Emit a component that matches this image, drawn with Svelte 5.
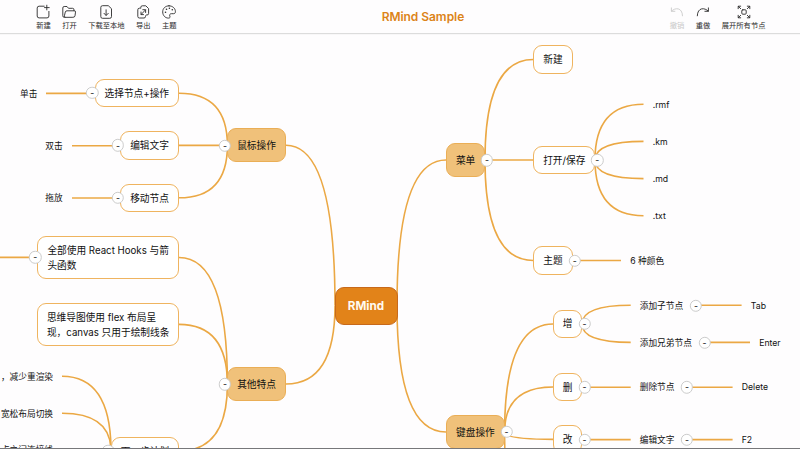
<script>
  const left = [
    { label: '新建', icon: 'new' },
    { label: '打开', icon: 'open' },
    { label: '下载至本地', icon: 'download' },
    { label: '导出', icon: 'export' },
    { label: '主题', icon: 'theme' }
  ];
  const right = [
    { label: '撤销', icon: 'undo', disabled: true },
    { label: '重做', icon: 'redo' },
    { label: '展开所有节点', icon: 'expand' }
  ];

  // x, y: top-left corner of the node on the canvas
  const nodes = [
    { kind: 'root', text: 'RMind', x: 334.5, y: 286.5, w: 63, h: 38 },
    { kind: 'main', text: '鼠标操作', x: 227, y: 128.3, w: 59, h: 34.2 },
    { kind: 'main', text: '其他特点', x: 227, y: 367, w: 59, h: 34.2 },
    { kind: 'main', text: '菜单', x: 446, y: 143, w: 39.2, h: 34.2 },
    { kind: 'main', text: '键盘操作', x: 446, y: 415, w: 58.8, h: 34.2 },
    { kind: 'sub', text: '选择节点+操作', x: 94.6, y: 79, w: 84.4, h: 28.3 },
    { kind: 'sub', text: '编辑文字', x: 120, y: 131.3, w: 59, h: 28.3 },
    { kind: 'sub', text: '移动节点', x: 120, y: 183.7, w: 59, h: 28.3 },
    { kind: 'sub', text: '全部使用 React Hooks 与箭\n头函数', x: 37.3, y: 236, w: 141.7, h: 43 },
    { kind: 'sub', text: '思维导图使用 flex 布局呈\n现，canvas 只用于绘制线条', x: 37.3, y: 303, w: 141.7, h: 43 },
    { kind: 'sub', text: '下一步计划', x: 111, y: 437, w: 68, h: 28.3 },
    { kind: 'sub', text: '新建', x: 533.3, y: 45.3, w: 39.4, h: 28.3 },
    { kind: 'sub', text: '打开/保存', x: 533.3, y: 146, w: 62, h: 28.3 },
    { kind: 'sub', text: '主题', x: 533.3, y: 246.3, w: 39.4, h: 28.3 },
    { kind: 'sub', text: '增', x: 553, y: 309.5, w: 29.3, h: 28.3 },
    { kind: 'sub', text: '删', x: 553, y: 373, w: 29.3, h: 28.3 },
    { kind: 'sub', text: '改', x: 553, y: 425.3, w: 29.3, h: 28.3 }
  ];

  // x: left edge of the text (right edge when end is set), y: its middle
  const leaves = [
    { text: '单击', x: 20, y: 93.5 },
    { text: '双击', x: 45.3, y: 146 },
    { text: '拖放', x: 45.3, y: 198 },
    { text: '，减少重渲染', x: 53, y: 376.5, end: true },
    { text: '宽松布局切换', x: 53, y: 413.5, end: true },
    { text: '点之间连接线', x: 53, y: 450, end: true },
    { text: '.rmf', x: 652.7, y: 104.5 },
    { text: '.km', x: 652.7, y: 141.8 },
    { text: '.md', x: 652.7, y: 178.8 },
    { text: '.txt', x: 652.7, y: 216 },
    { text: '6 种颜色', x: 630.2, y: 261 },
    { text: '添加子节点', x: 639.7, y: 305.5 },
    { text: 'Tab', x: 750.8, y: 305.5 },
    { text: '添加兄弟节点', x: 639.7, y: 342.5 },
    { text: 'Enter', x: 759.2, y: 342.5 },
    { text: '删除节点', x: 639.7, y: 387.3 },
    { text: 'Delete', x: 741.7, y: 387.3 },
    { text: '编辑文字', x: 639.7, y: 439.7 },
    { text: 'F2', x: 741.7, y: 439.7 }
  ];

  const toggles = [
    [92.3, 93], [118, 145.4], [118, 198], [35.3, 257.3], [225, 145.5], [225, 384.2], [108.3, 451],
    [487, 160.2], [597.2, 160.2], [574.7, 260.5], [584.6, 324], [584.6, 387.2], [584.6, 439.6],
    [506.6, 432], [695.9, 305.5], [704.5, 342.6], [687, 387.2], [687, 439.6]
  ];

  // [parent x, parent y, child x, child y]
  const links = [
    [335, 305.5, 286, 145.3], [335, 305.5, 286, 384], [397, 305.5, 446, 160], [397, 305.5, 446, 432],
    [227.4, 145.4, 179, 93.2], [227.4, 145.4, 179, 145.4], [227.4, 145.4, 179, 197.8],
    [227.4, 384.2, 179, 257.5], [227.4, 384.2, 179, 324.4], [227.4, 384.2, 179, 451],
    [111, 451, 62, 376.3], [111, 451, 62, 413.3], [111, 451, 62, 450.5],
    [92, 93.4, 46, 93.4], [118, 145.8, 72, 145.8], [118, 198, 72, 198], [37, 257.4, -10, 257.4],
    [485, 160, 533.3, 59.5], [485, 160, 533.3, 160], [485, 160, 533.3, 260.5],
    [595, 160, 643.5, 104.3], [595, 160, 643.5, 141.4], [595, 160, 643.5, 178.6], [595, 160, 643.5, 215.7],
    [573, 260.5, 621, 260.5],
    [504.6, 432, 553, 324], [504.6, 432, 553, 387], [504.6, 432, 553, 439.4], [504.6, 432, 553, 560],
    [582, 324, 630.7, 305.3], [582, 324, 630.7, 342.4], [582, 387.2, 630.7, 387.2], [582, 439.6, 630.7, 439.6],
    [696, 305.3, 741.6, 305.3], [704, 342.4, 750, 342.4], [687, 387.2, 732.6, 387.2], [687, 439.6, 732.6, 439.6]
  ];
  const curve = ([px, py, cx, cy]) => `M${px} ${py}Q${px} ${cy} ${cx} ${cy}`;
</script>

{#snippet tool(t)}
  <button class="tool" class:disabled={t.disabled}>
    <svg viewBox="0 0 14 14" class="icon">
      {#if t.icon === 'new'}
        <path d="M8.2 1.2H3.1Q1.2 1.2 1.2 3.1V11Q1.2 12.9 3.1 12.9H11Q12.9 12.9 12.9 11V6.4M10.8.2v4.7M8.5 2.6h4.7" />
      {:else if t.icon === 'open'}
        <path d="M3.3 12.3H2.2Q.8 12.3.8 10.8V3Q.8 1.5 2.2 1.5H5l1.5 1.8H10.6Q12 3.3 12 4.9V5.7M3 12.3Q1.8 12.2 2.4 10.8L3.3 7Q3.6 5.8 5 5.8H12.3Q13.7 5.8 13.5 7.1L13 10.8Q12.8 12.3 11.3 12.3Z" />
      {:else if t.icon === 'download'}
        <path d="M8.9.7H3.5Q1.8.7 1.8 2.4V11.6Q1.8 13.3 3.5 13.3H10.8Q12.5 13.3 12.5 11.6V4.1ZM7.1 4.8v5.3M5 8.3l2.1 2.2 2.2-2.2" />
      {:else if t.icon === 'export'}
        <path d="M4.8 3V2.4Q4.8.8 6.3.8H9.8L12.6 3.6V8.5Q12.6 10 11 10H10.4M4.3 3.2H3.4Q1.8 3.2 1.8 4.8V11.4Q1.8 13 3.4 13H8Q9.5 13 9.5 11.4V10.8M5.2 9.4 9.4 5M6.8 4.7H9.6V7.5M5 7V9.6H7.5" />
      {:else if t.icon === 'theme'}
        <path d="M7 .8C3.3.8.7 3.4.7 6.9c0 3.6 2.6 6.2 5.7 6.2 1.7 0 1.9-1 1.4-2-.5-1.2.1-2.4 1.5-2.4h2.2c1.3 0 1.9-.8 1.9-2C13.4 3.3 10.6.8 7 .8Z" />
        <g class="fill"><circle cx="3.5" cy="7.2" r=".8" /><circle cx="4.5" cy="4.3" r=".8" /><circle cx="7.4" cy="3.2" r=".8" /><circle cx="10.3" cy="4.8" r=".8" /></g>
      {:else if t.icon === 'undo'}
        <path d="M1.4 2.9V6.3H4.9M1.6 6.1C5 2.4 12.3 2.1 12.5 10.8" />
      {:else if t.icon === 'redo'}
        <path d="M12.4 2.9V6.3H8.9M12.2 6.1C8.8 2.4 1.5 2.1 1.3 10.8" />
      {:else}
        <rect x="4.8" y="4.8" width="4.4" height="4.4" rx="1" />
        <path d="M3.7 1.2H1.2V3.7M10.3 1.2H12.8V3.7M3.7 12.8H1.2V10.3M10.3 12.8H12.8V10.3M1.4 1.4 3.7 3.7M12.6 1.4 10.3 3.7M1.4 12.6 3.7 10.3M12.6 12.6 10.3 10.3" />
      {/if}
    </svg>
    <span>{t.label}</span>
  </button>
{/snippet}

<div class="app">
  <header>
    <nav>{#each left as t}{@render tool(t)}{/each}</nav>
    <h1>RMind Sample</h1>
    <nav class="end">{#each right as t}{@render tool(t)}{/each}</nav>
  </header>
  <main>
    <div class="map">
      <svg class="links" viewBox="0 0 800 449">
        {#each links as l}<path d={curve(l)} />{/each}
      </svg>
      {#each nodes as n}
        <div class="node {n.kind}" style="left:{n.x}px;top:{n.y}px;width:{n.w}px;height:{n.h}px">{n.text}</div>
      {/each}
      {#each leaves as n}
        <div class="leaf" class:flip={n.end} style="left:{n.x}px;top:{n.y}px">{n.text}</div>
      {/each}
      {#each toggles as [x, y]}
        <div class="toggle" style="left:{x}px;top:{y}px">-</div>
      {/each}
    </div>
  </main>
</div>

<style>
  :global(body) {
    margin: 0;
    background: #fefefe;
  }
  .app {
    display: flex;
    flex-direction: column;
    box-sizing: border-box;
    width: 800px;
    height: 449px;
    overflow: hidden;
    border-bottom: 1px solid #77777a;
    background: #fefdfe;
    color: #111;
    font-family: Inter, 'Noto Sans CJK SC', sans-serif;
  }
  header {
    display: flex;
    box-sizing: border-box;
    flex: none;
    height: 34px;
    padding: 5px 34.5px 0 36.2px;
    border-bottom: 1px solid #dcdcdc;
    box-shadow: 0 0 1px #ddd;
  }
  nav {
    display: flex;
    gap: 11.4px;
    width: 345.5px;
  }
  .end {
    flex: 1;
    width: auto;
    justify-content: flex-end;
  }
  h1 {
    margin: 4px 0 0;
    color: #dc8418;
    font-size: 12px;
    line-height: 15px;
    font-weight: 600;
    letter-spacing: -0.05px;
  }
  .tool {
    display: flex;
    flex-direction: column;
    align-items: center;
    gap: 1px;
    height: 26px;
    padding: 0;
    border: 0;
    background: none;
    color: #2a2a2a;
    font: 7.3px/11px Inter, 'Noto Sans CJK SC', sans-serif;
    white-space: nowrap;
  }
  .disabled {
    color: #c9c9c9;
  }
  .icon {
    width: 14px;
    height: 14px;
    flex: none;
    overflow: visible;
    fill: none;
    stroke: currentColor;
    stroke-width: 0.9;
    stroke-linecap: round;
    stroke-linejoin: round;
  }
  .fill {
    fill: currentColor;
    stroke: none;
  }
  main {
    position: relative;
    flex: 1;
  }
  .map {
    position: absolute;
    inset: -34px 0 0;
    clip-path: inset(34px 0 0);
  }
  .links {
    position: absolute;
    width: 800px;
    height: 449px;
    fill: none;
    stroke: #eba844;
    stroke-width: 1.6;
  }
  .node {
    position: absolute;
    display: flex;
    align-items: center;
    justify-content: center;
    box-sizing: border-box;
    padding-top: 2px;
    border: 1px solid #efb45f;
    border-radius: 9px;
    background: #fff;
    font-size: 9.7px;
    line-height: 14.6px;
    white-space: pre;
  }
  .main {
    border-color: #eaae56;
    background: #f0c17a;
  }
  .root {
    border-color: #c7691b;
    background: #e28319;
    color: #fffaf0;
    font-size: 11.7px;
    font-weight: 700;
  }
  .leaf {
    position: absolute;
    transform: translateY(-50%);
    font-size: 8.7px;
    line-height: 14px;
    white-space: nowrap;
  }
  .flip {
    transform: translate(-100%, -50%);
  }
  .toggle {
    position: absolute;
    display: flex;
    align-items: center;
    justify-content: center;
    box-sizing: border-box;
    width: 12.4px;
    height: 12.4px;
    border: 1px solid #ccc;
    border-radius: 50%;
    background: #fff;
    transform: translate(-50%, -50%);
    font-size: 8.7px;
    line-height: 10px;
  }
</style>
